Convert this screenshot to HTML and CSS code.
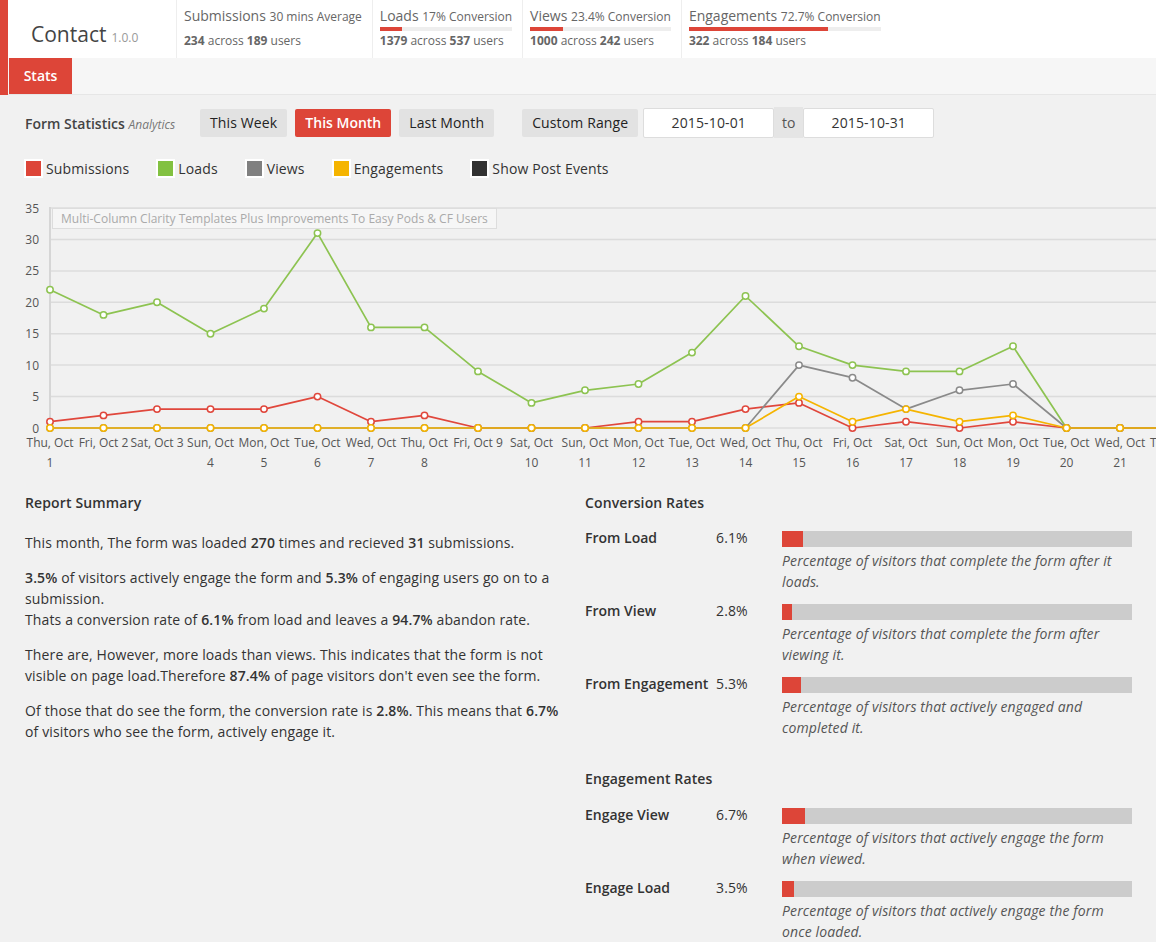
FILE: index.html
```html
<!DOCTYPE html>
<html lang="en">
<head>
<meta charset="utf-8">
<title>Contact - Stats</title>
<link rel="stylesheet" href="styles.css">
</head>
<body>
<div class="shell">
  <header class="topbar">
    <div class="brand"><span class="brand-name">Contact</span><span class="brand-ver">1.0.0</span></div>
    <div class="stat">
      <div class="stat-head">
        <div class="stat-title">Submissions <small>30 mins Average</small></div>
        <div class="stat-bar none"></div>
      </div>
      <div class="stat-sub"><b>234</b> across <b>189</b> users</div>
    </div>
    <div class="stat">
      <div class="stat-head">
        <div class="stat-title">Loads <small>17% Conversion</small></div>
        <div class="stat-bar"><span style="width:17%"></span></div>
      </div>
      <div class="stat-sub"><b>1379</b> across <b>537</b> users</div>
    </div>
    <div class="stat">
      <div class="stat-head">
        <div class="stat-title">Views <small>23.4% Conversion</small></div>
        <div class="stat-bar"><span style="width:23.4%"></span></div>
      </div>
      <div class="stat-sub"><b>1000</b> across <b>242</b> users</div>
    </div>
    <div class="stat">
      <div class="stat-head">
        <div class="stat-title">Engagements <small>72.7% Conversion</small></div>
        <div class="stat-bar"><span style="width:72.7%"></span></div>
      </div>
      <div class="stat-sub"><b>322</b> across <b>184</b> users</div>
    </div>
  </header>
  <nav class="tabs"><span class="tab">Stats</span></nav>
</div>

<main class="main">
  <div class="controls">
    <div class="ctl-title">Form Statistics <em>Analytics</em></div>
    <span class="btn">This Week</span>
    <span class="btn active">This Month</span>
    <span class="btn">Last Month</span>
    <span class="btn custom">Custom Range</span>
    <div class="date-group">
      <span class="date">2015-10-01</span>
      <span class="addon">to</span>
      <span class="date">2015-10-31</span>
    </div>
  </div>

  <div class="legend">
    <span class="legend-item"><i class="swatch sw-red"></i>Submissions</span>
    <span class="legend-item"><i class="swatch sw-green"></i>Loads</span>
    <span class="legend-item"><i class="swatch sw-gray"></i>Views</span>
    <span class="legend-item"><i class="swatch sw-yellow"></i>Engagements</span>
    <span class="legend-item"><i class="swatch sw-dark"></i>Show Post Events</span>
  </div>

  <div class="chart">
    <svg class="chart-svg" width="1156" height="280" viewBox="0 195 1156 280">
      <defs>
        <marker id="mg" markerUnits="userSpaceOnUse" markerWidth="10" markerHeight="10" refX="5" refY="5" viewBox="0 0 10 10"><circle cx="5" cy="5" r="3.2" fill="#fff" stroke="#8dc351" stroke-width="1.5"/></marker>
        <marker id="mr" markerUnits="userSpaceOnUse" markerWidth="10" markerHeight="10" refX="5" refY="5" viewBox="0 0 10 10"><circle cx="5" cy="5" r="3.2" fill="#fff" stroke="#e0473c" stroke-width="1.5"/></marker>
        <marker id="mgr" markerUnits="userSpaceOnUse" markerWidth="10" markerHeight="10" refX="5" refY="5" viewBox="0 0 10 10"><circle cx="5" cy="5" r="3.2" fill="#fff" stroke="#8a8a8a" stroke-width="1.5"/></marker>
        <marker id="my" markerUnits="userSpaceOnUse" markerWidth="10" markerHeight="10" refX="5" refY="5" viewBox="0 0 10 10"><circle cx="5" cy="5" r="3.2" fill="#fff" stroke="#f5b400" stroke-width="1.5"/></marker>
      </defs>
      <g class="grid">
        <line x1="50" y1="208" x2="1156" y2="208"/>
        <line x1="50" y1="239.4" x2="1156" y2="239.4"/>
        <line x1="50" y1="270.9" x2="1156" y2="270.9"/>
        <line x1="50" y1="302.3" x2="1156" y2="302.3"/>
        <line x1="50" y1="333.7" x2="1156" y2="333.7"/>
        <line x1="50" y1="365.1" x2="1156" y2="365.1"/>
        <line x1="50" y1="396.6" x2="1156" y2="396.6"/>
        <line x1="50" y1="428" x2="1156" y2="428"/>
      </g>
      <line class="yaxis" x1="50" y1="207" x2="50" y2="429"/>
      <g class="ylabels">
        <text x="39" y="212.5">35</text>
        <text x="39" y="243.9">30</text>
        <text x="39" y="275.4">25</text>
        <text x="39" y="306.8">20</text>
        <text x="39" y="338.2">15</text>
        <text x="39" y="369.6">10</text>
        <text x="39" y="401.1">5</text>
        <text x="39" y="432.5">0</text>
      </g>
      <g class="xlabels">
        <text x="50" y="447">Thu, Oct</text><text x="50" y="467">1</text>
        <text x="103.5" y="447">Fri, Oct 2</text>
        <text x="157" y="447">Sat, Oct 3</text>
        <text x="210.5" y="447">Sun, Oct</text><text x="210.5" y="467">4</text>
        <text x="264" y="447">Mon, Oct</text><text x="264" y="467">5</text>
        <text x="317.5" y="447">Tue, Oct</text><text x="317.5" y="467">6</text>
        <text x="371" y="447">Wed, Oct</text><text x="371" y="467">7</text>
        <text x="424.5" y="447">Thu, Oct</text><text x="424.5" y="467">8</text>
        <text x="478" y="447">Fri, Oct 9</text>
        <text x="531.5" y="447">Sat, Oct</text><text x="531.5" y="467">10</text>
        <text x="585" y="447">Sun, Oct</text><text x="585" y="467">11</text>
        <text x="638.5" y="447">Mon, Oct</text><text x="638.5" y="467">12</text>
        <text x="692" y="447">Tue, Oct</text><text x="692" y="467">13</text>
        <text x="745.5" y="447">Wed, Oct</text><text x="745.5" y="467">14</text>
        <text x="799" y="447">Thu, Oct</text><text x="799" y="467">15</text>
        <text x="852.5" y="447">Fri, Oct</text><text x="852.5" y="467">16</text>
        <text x="906" y="447">Sat, Oct</text><text x="906" y="467">17</text>
        <text x="959.5" y="447">Sun, Oct</text><text x="959.5" y="467">18</text>
        <text x="1013" y="447">Mon, Oct</text><text x="1013" y="467">19</text>
        <text x="1066.5" y="447">Tue, Oct</text><text x="1066.5" y="467">20</text>
        <text x="1120" y="447">Wed, Oct</text><text x="1120" y="467">21</text>
        <text x="1173.5" y="447">Thu, Oct</text><text x="1173.5" y="467">22</text>
      </g>
      <polyline class="ln ln-green" marker-start="url(#mg)" marker-mid="url(#mg)" marker-end="url(#mg)" points="50,289.7 103.5,314.9 157,302.3 210.5,333.7 264,308.6 317.5,233.1 371,327.4 424.5,327.4 478,371.4 531.5,402.9 585,390.3 638.5,384 692,352.6 745.5,296 799,346.3 852.5,365.1 906,371.4 959.5,371.4 1013,346.3 1066.5,428 1120,428 1173.5,428 1227,428"/>
      <polyline class="ln ln-red" marker-start="url(#mr)" marker-mid="url(#mr)" marker-end="url(#mr)" points="50,421.7 103.5,415.4 157,409.1 210.5,409.1 264,409.1 317.5,396.6 371,421.7 424.5,415.4 478,428 531.5,428 585,428 638.5,421.7 692,421.7 745.5,409.1 799,402.9 852.5,428 906,421.7 959.5,428 1013,421.7 1066.5,428 1120,428 1173.5,428 1227,428"/>
      <polyline class="ln ln-gray" marker-start="url(#mgr)" marker-mid="url(#mgr)" marker-end="url(#mgr)" points="50,428 103.5,428 157,428 210.5,428 264,428 317.5,428 371,428 424.5,428 478,428 531.5,428 585,428 638.5,428 692,428 745.5,428 799,365.1 852.5,377.7 906,409.1 959.5,390.3 1013,384 1066.5,428 1120,428 1173.5,428 1227,428"/>
      <polyline class="ln ln-yellow" marker-start="url(#my)" marker-mid="url(#my)" marker-end="url(#my)" points="50,428 103.5,428 157,428 210.5,428 264,428 317.5,428 371,428 424.5,428 478,428 531.5,428 585,428 638.5,428 692,428 745.5,428 799,396.6 852.5,421.7 906,409.1 959.5,421.7 1013,415.4 1066.5,428 1120,428 1173.5,428 1227,428"/>
    </svg>
    <div class="note">Multi-Column Clarity Templates Plus Improvements To Easy Pods &amp; CF Users</div>
  </div>

  <div class="report">
    <section class="summary">
      <h3>Report Summary</h3>
      <p>This month, The form was loaded <b>270</b> times and recieved <b>31</b> submissions.</p>
      <p><b>3.5%</b> of visitors actively engage the form and <b>5.3%</b> of engaging users go on to a submission.<br>Thats a conversion rate of <b>6.1%</b> from load and leaves a <b>94.7%</b> abandon rate.</p>
      <p>There are, However, more loads than views. This indicates that the form is not visible on page load.Therefore <b>87.4%</b> of page visitors don't even see the form.</p>
      <p>Of those that do see the form, the conversion rate is <b>2.8%</b>. This means that <b>6.7%</b> of visitors who see the form, actively engage it.</p>
    </section>
    <section class="rates">
      <h3>Conversion Rates</h3>
      <div class="rate">
        <div class="rate-label">From Load</div>
        <div class="rate-pct">6.1%</div>
        <div class="rate-col">
          <div class="rate-bar"><span style="width:6.1%"></span></div>
          <div class="rate-desc">Percentage of visitors that complete the form after it loads.</div>
        </div>
      </div>
      <div class="rate">
        <div class="rate-label">From View</div>
        <div class="rate-pct">2.8%</div>
        <div class="rate-col">
          <div class="rate-bar"><span style="width:2.8%"></span></div>
          <div class="rate-desc">Percentage of visitors that complete the form after viewing it.</div>
        </div>
      </div>
      <div class="rate">
        <div class="rate-label">From Engagement</div>
        <div class="rate-pct">5.3%</div>
        <div class="rate-col">
          <div class="rate-bar"><span style="width:5.3%"></span></div>
          <div class="rate-desc">Percentage of visitors that actively engaged and completed it.</div>
        </div>
      </div>
      <h3 class="second">Engagement Rates</h3>
      <div class="rate">
        <div class="rate-label">Engage View</div>
        <div class="rate-pct">6.7%</div>
        <div class="rate-col">
          <div class="rate-bar"><span style="width:6.7%"></span></div>
          <div class="rate-desc">Percentage of visitors that actively engage the form when viewed.</div>
        </div>
      </div>
      <div class="rate">
        <div class="rate-label">Engage Load</div>
        <div class="rate-pct">3.5%</div>
        <div class="rate-col">
          <div class="rate-bar"><span style="width:3.5%"></span></div>
          <div class="rate-desc">Percentage of visitors that actively engage the form once loaded.</div>
        </div>
      </div>
    </section>
  </div>
</main>
</body>
</html>
```

FILE: styles.css
```css
* { box-sizing: border-box; }

html, body {
  margin: 0;
  padding: 0;
  overflow-x: hidden;
}

body {
  background: #f1f1f1;
  font-family: "Open Sans", "Liberation Sans", sans-serif;
  font-size: 14px;
  color: #333;
}

/* ---------- header ---------- */
.shell {
  border-left: 8px solid #dd4538;
}

.topbar {
  display: flex;
  height: 58px;
  background: #fff;
}

.brand {
  width: 168px;
  padding: 20px 0 0 23px;
  white-space: nowrap;
}

.brand-name {
  font-size: 21px;
  line-height: 28px;
  color: #444;
}

.brand-ver {
  font-size: 12px;
  color: #999;
  margin-left: 5px;
}

.stat {
  display: flex;
  flex-direction: column;
  border-left: 1px solid #eee;
  padding: 6px 10px 0 7px;
  color: #666;
}

.stat-head {
  align-self: flex-start;
}

.stat-title {
  font-size: 14px;
  line-height: 20px;
  white-space: nowrap;
}

.stat-title small {
  font-size: 12px;
}

.stat-bar {
  height: 4px;
  background: #eee;
}

.stat-bar span {
  display: block;
  height: 100%;
  background: #dd4538;
}

.stat-bar.none {
  background: transparent;
}

.stat-sub {
  font-size: 12px;
  line-height: 20px;
  white-space: nowrap;
}

.stat-sub b {
  font-weight: 700;
}

.tabs {
  display: flex;
  height: 37px;
  background: #f6f6f6;
  border-bottom: 1px solid #e6e6e6;
  padding-left: 1px;
}

.tab {
  width: 63px;
  height: 36px;
  line-height: 36px;
  text-align: center;
  background: #dd4538;
  color: #fff;
  font-weight: 600;
  font-size: 14px;
}

/* ---------- controls ---------- */
.main {
  padding: 13px 25px 0;
  letter-spacing: 0.13px;
}

.controls {
  display: flex;
  align-items: center;
  height: 30px;
}

.ctl-title {
  width: 175px;
  font-size: 14px;
  font-weight: 600;
  color: #444;
  letter-spacing: 0;
  white-space: nowrap;
}

.ctl-title em {
  font-weight: 400;
  font-size: 12px;
  color: #777;
}

.btn {
  height: 28px;
  line-height: 28px;
  padding: 0 10px;
  margin-right: 8px;
  background: #e2e2e2;
  border-radius: 2px;
  font-size: 14px;
  color: #222;
  white-space: nowrap;
}

.btn.active {
  background: #dd4538;
  color: #fff;
  font-weight: 600;
  letter-spacing: 0;
}

.btn.custom {
  margin-left: 20px;
  margin-right: 5px;
}

.date-group {
  display: flex;
  height: 30px;
}

.date {
  width: 131px;
  height: 30px;
  line-height: 28px;
  border: 1px solid #ddd;
  border-radius: 2px;
  background: #fff;
  text-align: center;
  font-size: 14px;
  color: #333;
}

.addon {
  width: 29px;
  height: 31px;
  margin-top: -1px;
  line-height: 31px;
  background: #e5e5e5;
  text-align: center;
  color: #555;
}

/* ---------- legend ---------- */
.legend {
  display: flex;
  align-items: center;
  height: 20px;
  margin-top: 20px;
}

.legend-item {
  display: flex;
  align-items: center;
  margin-right: 27px;
  font-size: 14px;
  color: #333;
  white-space: nowrap;
}

.swatch {
  display: block;
  width: 19px;
  height: 19px;
  border: 2px solid #fff;
  margin-right: 3px;
}

.legend-item:first-child .swatch { margin-left: -1px; }

.sw-red { background: #dd4538; }
.sw-green { background: #82c141; }
.sw-gray { background: #808080; }
.sw-yellow { background: #f5b400; }
.sw-dark { background: #333; }

/* ---------- chart ---------- */
.chart {
  position: relative;
  margin: 17px -25px 0;
  height: 280px;
  overflow: hidden;
  letter-spacing: 0;
}

.chart-svg {
  display: block;
}

.chart-svg .grid line {
  stroke: #dcdcdc;
  stroke-width: 1.5;
}

.chart-svg .yaxis {
  stroke: #d6d6d6;
  stroke-width: 2;
}

.chart-svg text {
  font-family: "Open Sans", "Liberation Sans", sans-serif;
  font-size: 12px;
  fill: #555;
}

.chart-svg .ylabels text { text-anchor: end; }
.chart-svg .xlabels text { text-anchor: middle; }

.chart-svg .ln {
  fill: none;
  stroke-width: 1.7;
  stroke-linejoin: round;
}

.ln-green { stroke: #8dc351; }
.ln-red { stroke: #e0473c; }
.ln-gray { stroke: #8a8a8a; }
.ln-yellow { stroke: #f5b400; }

.note {
  position: absolute;
  left: 52px;
  top: 13px;
  height: 21px;
  padding: 0 8px;
  border: 1px solid #ddd;
  background: #f6f6f6;
  font-size: 12px;
  line-height: 19px;
  color: #aaa;
  white-space: nowrap;
}

/* ---------- report ---------- */
.report {
  display: grid;
  grid-template-columns: 545px 547px;
  column-gap: 15px;
  margin-top: 17px;
}

.report h3 {
  margin: 0;
  font-size: 14px;
  font-weight: 600;
  line-height: 21px;
  color: #333;
}

.summary h3 { margin-bottom: 19px; }

.summary p {
  margin: 0 0 14px;
  line-height: 21px;
}

.summary b { font-weight: 600; }

.rates h3 { margin-bottom: 14px; }

.rates h3.second {
  margin-top: 22px;
  margin-bottom: 15px;
}

.rate {
  display: flex;
  padding-bottom: 8px;
}

.rate-label {
  width: 131px;
  font-weight: 600;
  line-height: 21px;
  white-space: nowrap;
  letter-spacing: 0;
}

.rate-pct {
  width: 66px;
  line-height: 21px;
}

.rate-col {
  width: 350px;
}

.rate-bar {
  margin-top: 4px;
  height: 16px;
  background: #ccc;
}

.rate-bar span {
  display: block;
  height: 100%;
  background: #dd4538;
}

.rate-desc {
  margin-top: 3px;
  font-style: italic;
  line-height: 21px;
  color: #555;
}
```
